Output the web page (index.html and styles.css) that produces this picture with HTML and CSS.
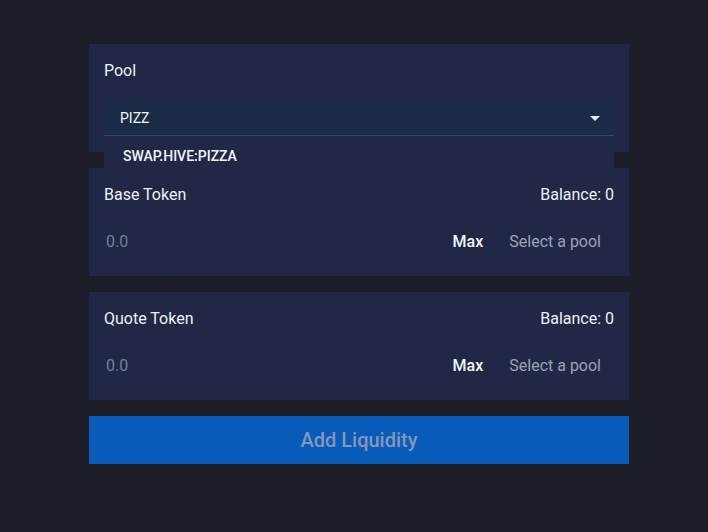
FILE: index.html
```html
<!DOCTYPE html>
<html>
<head>
<meta charset="utf-8">
<link rel="stylesheet" href="styles.css">
</head>
<body>
<div class="wrap">
  <div class="card pool">
    <div class="label">Pool</div>
    <div class="select-wrap">
      <div class="select">
        <span class="select-value">PIZZ</span>
        <svg class="caret" width="10" height="5" viewBox="0 0 10 5"><path d="M0 0 L10 0 L5 5 Z" fill="#e6e9f0"/></svg>
      </div>
      <div class="menu">
        <div class="menu-item">SWAP.HIVE:PIZZA</div>
      </div>
    </div>
  </div>
  <div class="card token">
    <div class="row head">
      <span>Base Token</span>
      <span>Balance: 0</span>
    </div>
    <div class="row input-row">
      <span class="amount">0.0</span>
      <span class="max">Max</span>
      <span class="sym">Select a pool</span>
    </div>
  </div>
  <div class="card token">
    <div class="row head">
      <span>Quote Token</span>
      <span>Balance: 0</span>
    </div>
    <div class="row input-row">
      <span class="amount">0.0</span>
      <span class="max">Max</span>
      <span class="sym">Select a pool</span>
    </div>
  </div>
  <div class="btn">Add Liquidity</div>
</div>
</body>
</html>
```
FILE: styles.css
```css
html, body {
  margin: 0;
  padding: 0;
  background: #1c1e2a;
  font-family: Roboto, "Liberation Sans", sans-serif;
  color: #eef0f5;
}
.wrap {
  width: 540px;
  margin: 44px 0 0 89px;
  display: flex;
  flex-direction: column;
  gap: 16px;
}
.card {
  background: #212846;
  padding: 14px 15px 15px;
}
.pool {
  padding-top: 15px;
  padding-bottom: 16px;
  position: relative;
  z-index: 2;
}
.label {
  font-size: 16px;
  line-height: 24px;
}
.select-wrap {
  position: relative;
  margin-top: 17px;
}
.select {
  height: 36px;
  background: #1b2a45;
  display: flex;
  align-items: center;
  justify-content: space-between;
  padding: 0 14px 0 16px;
  box-sizing: border-box;
  border-bottom: 1px solid #3a4663;
}
.select-value {
  font-size: 14px;
  color: #f2f4f8;
}
.caret {
  display: block;
  margin-top: 1px;
}
.menu {
  position: absolute;
  top: 37px;
  left: 0;
  right: 0;
  background: #212846;
  padding: 7px 0 8px;
}
.menu-item {
  font-size: 14px;
  font-weight: 500;
  line-height: 24px;
  padding-left: 19px;
  color: #f2f4f8;
}
.row {
  display: flex;
  align-items: center;
}
.head {
  height: 24px;
  justify-content: space-between;
  font-size: 16px;
}
.input-row {
  height: 40px;
  margin-top: 15px;
  font-size: 16px;
}
.amount {
  flex: 1;
  padding-left: 2px;
  color: #6f80a8;
}
.max {
  font-weight: 500;
  color: #f2f4f8;
  margin-right: 26px;
}
.sym {
  color: #9aa3b8;
  margin-right: 13px;
}
.btn {
  height: 48px;
  background: #095bb9;
  display: flex;
  align-items: center;
  justify-content: center;
  font-size: 20px;
  font-weight: 500;
  color: #8398ba;
}
```
